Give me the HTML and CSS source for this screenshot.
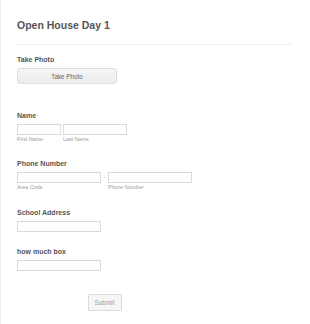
FILE: index.html
```html
<!DOCTYPE html>
<html lang="en">
<head>
  <meta charset="UTF-8" />
  <meta name="viewport" content="width=device-width, initial-scale=1.0" />
  <title>Open House Day 1</title>
  <link rel="stylesheet" href="styles.css">
</head>
<body>
  <div class="form-page">
    <div class="form-header">Open House Day 1</div>
    <div class="divider"></div>

    <div class="field field-photo">
      <div class="field-label">Take Photo</div>
      <button type="button" class="photo-btn">Take Photo</button>
    </div>

    <div class="field field-name">
      <div class="field-label">Name</div>
      <div class="inputs">
        <div class="sub">
          <input type="text" class="box box-first" />
          <span class="sublabel">First Name</span>
        </div>
        <div class="sub">
          <input type="text" class="box box-last" />
          <span class="sublabel">Last Name</span>
        </div>
      </div>
    </div>

    <div class="field field-phone">
      <div class="field-label">Phone Number</div>
      <div class="inputs">
        <div class="sub">
          <input type="text" class="box box-wide" />
          <span class="sublabel">Area Code</span>
        </div>
        <span class="dash">-</span>
        <div class="sub">
          <input type="text" class="box box-wide" />
          <span class="sublabel">Phone Number</span>
        </div>
      </div>
    </div>

    <div class="field field-address">
      <div class="field-label">School Address</div>
      <input type="text" class="box box-wide" />
    </div>

    <div class="field field-box">
      <div class="field-label">how much box</div>
      <input type="text" class="box box-wide" />
    </div>

    <div class="submit-row">
      <button type="submit" class="submit-btn">Submit</button>
    </div>
  </div>
</body>
</html>
```

FILE: styles.css
```css
* {
  box-sizing: border-box;
  margin: 0;
  padding: 0;
}

html, body {
  height: 100%;
  background: #fff;
  font-family: "Liberation Sans", Arial, sans-serif;
  overflow: hidden;
}

.form-page {
  height: 100%;
  padding: 19px 17px 0 17px;
  border-left: 1px solid #eeeeee;
  padding-left: 16px;
}

.form-header {
  font-size: 10.5px;
  line-height: 13px;
  font-weight: bold;
  color: #555;
}

.divider {
  margin-top: 12px;
  height: 1px;
  background: #f0f0f0;
}

.field-label {
  font-size: 7px;
  line-height: 9px;
  font-weight: bold;
  color: #555;
  margin-bottom: 4px;
}

.field-photo { margin-top: 10px; }
.field-name { margin-top: 27px; }
.field-phone { margin-top: 16px; }
.field-address { margin-top: 17px; }
.field-box { margin-top: 15px; }

.photo-btn {
  display: block;
  width: 100px;
  height: 16px;
  border: 1px solid #dcdcdc;
  border-radius: 3px;
  background: linear-gradient(#f6f6f6, #ececec);
  font-family: inherit;
  font-size: 6.3px;
  color: #666;
}

.inputs {
  display: flex;
  align-items: flex-start;
}

.sub {
  display: flex;
  flex-direction: column;
}

.field-name .sub + .sub {
  margin-left: 2px;
}

.box {
  display: block;
  height: 11px;
  border: 1px solid #dadada;
  background: #fff;
}

.box-first { width: 44px; }
.box-last { width: 64px; }
.box-wide { width: 84px; }

.sublabel {
  margin-top: 1px;
  font-size: 5.3px;
  line-height: 7px;
  color: #999;
}

.dash {
  width: 7px;
  text-align: center;
  font-size: 6px;
  line-height: 11px;
  color: #aaa;
}

.submit-row {
  width: 175px;
  margin-top: 20px;
  text-align: center;
}

.submit-btn {
  width: 34px;
  height: 17px;
  border: 1px solid #dcdcdc;
  border-radius: 1px;
  background: #f5f5f5;
  font-family: inherit;
  font-size: 6.4px;
  color: #a0a0a0;
}
```
